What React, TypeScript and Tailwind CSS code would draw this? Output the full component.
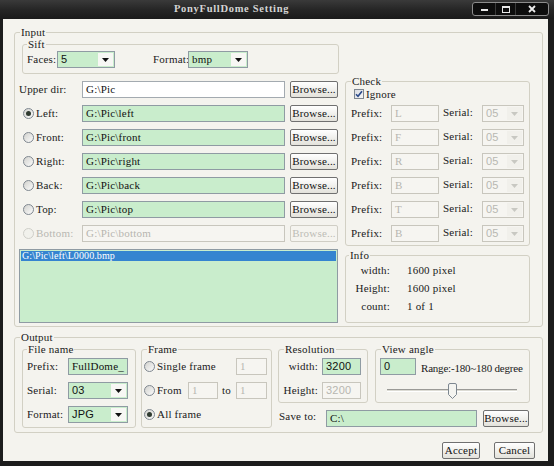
import React from "react";

const box = "border border-[#d2d0c4] rounded-[3px] min-w-0";

function Radio({ checked = false, disabled = false }: { checked?: boolean; disabled?: boolean }) {
  return (
    <span
      className={`w-[11px] h-[11px] shrink-0 rounded-full border flex items-center justify-center ${
        disabled ? "border-[#cfcfc9] bg-[#f1f1ec]" : "border-[#7f8790] bg-linear-to-br from-[#d2d2ce] to-[#fbfbfb]"
      }`}
    >
      {checked && <span className="w-[5px] h-[5px] rounded-full bg-[#2f3a30]" />}
    </span>
  );
}

type Kind = "green" | "white" | "disabled";

function Box({ value, kind, className = "" }: { value: string; kind: Kind; className?: string }) {
  const k =
    kind === "green"
      ? "bg-[#c9edcc] border-[#8f9ba3] text-[#111]"
      : kind === "white"
      ? "bg-white border-[#a3aab0] text-[#111]"
      : "bg-[#f6f5f1] border-[#c8c6bd] text-[#b6b6b0]";
  return (
    <div className={`h-[17px] shrink-0 border pl-[3px] leading-[15px] whitespace-nowrap overflow-hidden ${k} ${className}`}>
      {value}
    </div>
  );
}

function Select({ value, disabled = false, className = "" }: { value: string; disabled?: boolean; className?: string }) {
  return (
    <div
      className={`h-[17px] shrink-0 flex border ${
        disabled ? "border-[#c8c6bd] bg-[#f6f5f1] text-[#b8b8b2]" : "border-[#8f9ba3] bg-[#c9edcc] text-[#111]"
      } ${className}`}
    >
      <span className="flex-1 pl-[3px] leading-[15px] whitespace-nowrap overflow-hidden">{value}</span>
      <span
        className={`w-[15px] my-[1px] mr-[1px] flex items-center justify-center ${
          disabled ? "bg-[#f1f0eb]" : "bg-[#f7f7f4]"
        }`}
      >
        <svg width="7" height="4" viewBox="0 0 7 4">
          <path d="M0 0h7L3.5 4z" fill={disabled ? "#c8c8c2" : "#111"} />
        </svg>
      </span>
    </div>
  );
}

function Btn({ children, className = "", disabled = false }: { children: React.ReactNode; className?: string; disabled?: boolean }) {
  return (
    <button
      className={`h-[17px] shrink-0 border rounded-[2px] leading-[15px] text-[11px] tracking-[0.2px] ${
        disabled
          ? "border-[#d0cec5] text-[#bdbdb6] bg-[#f5f4ef]"
          : "border-[#707070] bg-linear-to-b from-[#ffffff] to-[#e3e2db] text-[#111]"
      } ${className}`}
    >
      {children}
    </button>
  );
}

function Legend({ children, className = "" }: { children: React.ReactNode; className?: string }) {
  return <legend className={`px-[1px] leading-[12px] ${className}`}>{children}</legend>;
}

const dirs: { label: string; path: string; checked?: boolean; disabled?: boolean }[] = [
  { label: "Left:", path: "G:\\Pic\\left", checked: true },
  { label: "Front:", path: "G:\\Pic\\front" },
  { label: "Right:", path: "G:\\Pic\\right" },
  { label: "Back:", path: "G:\\Pic\\back" },
  { label: "Top:", path: "G:\\Pic\\top" },
  { label: "Bottom:", path: "G:\\Pic\\bottom", disabled: true },
];

const prefixes = ["L", "F", "R", "B", "T", "B"];

export default function App() {
  return (
    <div className="w-[554px] h-[466px] bg-[#1c1c1c] flex flex-col font-['Liberation_Serif',serif] text-[11px] tracking-[0.2px] text-[#1a1a1a] overflow-hidden">
      {/* Title bar */}
      <div className="h-[19px] shrink-0 flex items-center bg-linear-to-b from-[#3a3a3a] via-[#262626] to-[#1a1a1a]">
        <span className="pl-[174px] font-bold text-[#d4d4d4] tracking-[0.7px] text-[10.5px] leading-none">
          PonyFullDome Setting
        </span>
        <div className="ml-auto mr-[5px] self-start mt-[2px] h-[14px] w-[77px] flex border border-[#8c8c8c] rounded-[3px] bg-[#0d0d0d]">
          <div className="w-[23px] flex items-end justify-center pb-[4px] border-r border-[#3a3a3a]">
            <span className="w-[7px] h-[2px] bg-[#e8e8e8]" />
          </div>
          <div className="w-[20px] flex items-center justify-center border-r border-[#3a3a3a]">
            <span className="w-[8px] h-[7px] border border-[#e8e8e8] border-t-2" />
          </div>
          <div className="flex-1 flex items-center justify-center">
            <svg width="8" height="8" viewBox="0 0 8 8">
              <path d="M1 1L7 7M7 1L1 7" stroke="#ececec" strokeWidth="1.8" />
            </svg>
          </div>
        </div>
      </div>

      {/* Body */}
      <div className="flex-1 ml-[3px] mr-[6px] mb-[5px] bg-[#f4f3ee] flex flex-col">
        {/* Input */}
        <fieldset className={`${box} ml-[11px] mt-[7px] w-[529px] pl-[4px] pb-[3px]`}>
          <Legend className="ml-[1px]">Input</Legend>
          <fieldset className={`${box} ml-[3px] w-[317px] pl-[4px] pb-[5px]`}>
            <Legend>Sift</Legend>
            <div className="mt-[1px] h-[17px] flex items-center">
              <span className="w-[30px]">Faces:</span>
              <Select value="5" className="w-[58px] font-['Liberation_Sans',sans-serif]" />
              <span className="ml-[38px] w-[35px]">Format:</span>
              <Select value="bmp" className="w-[60px]" />
            </div>
          </fieldset>

          <div className="flex mt-[1px]">
            <div className="w-[319px] pt-[6px] flex flex-col gap-[7px]">
              <div className="h-[17px] flex items-center">
                <span className="w-[63px]">Upper dir:</span>
                <Box value="G:\Pic" kind="white" className="w-[203px]" />
                <Btn className="ml-[5px] w-[48px]">Browse...</Btn>
              </div>
              {dirs.map((d) => (
                <div key={d.label} className="h-[17px] flex items-center">
                  <span className="pl-[4px]" />
                  <Radio checked={d.checked} disabled={d.disabled} />
                  <span className={`ml-[2px] w-[46px] ${d.disabled ? "text-[#b8b8b2]" : ""}`}>{d.label}</span>
                  <Box value={d.path} kind={d.disabled ? "disabled" : "green"} className="w-[203px]" />
                  <Btn className="ml-[5px] w-[48px]" disabled={d.disabled}>
                    Browse...
                  </Btn>
                </div>
              ))}
            </div>

            <fieldset className={`${box} ml-[7px] w-[185px] pl-[5px] pb-[3px]`}>
              <Legend>Check</Legend>
              <div className="h-[12px] mt-[1px] flex items-center pl-[3px]">
                <span className="w-[10px] h-[10px] border border-[#7f8790] bg-linear-to-br from-[#d9dce2] to-[#f6f6f6] flex items-center justify-center">
                  <svg width="8" height="8" viewBox="0 0 8 8">
                    <path d="M1 4.2L3 6.3L7 1.2" fill="none" stroke="#2b4a8a" strokeWidth="1.6" />
                  </svg>
                </span>
                <span className="ml-[2px]">Ignore</span>
              </div>
              <div className="mt-[5px] flex flex-col gap-[7px]">
                {prefixes.map((p, i) => (
                  <div key={i} className="h-[17px] flex items-center">
                    <span className="w-[40px]">Prefix:</span>
                    <Box value={p} kind="disabled" className="w-[48px]" />
                    <span className="ml-[4px] w-[39px] -mt-[3px]">Serial:</span>
                    <Select value="05" disabled className="w-[42px] font-['Liberation_Sans',sans-serif]" />
                  </div>
                ))}
              </div>
            </fieldset>
          </div>

          <div className="flex mt-[3px]">
            <div className="w-[319px] h-[74px] shrink-0 border border-[#8f9ba3] bg-[#c9edcc] p-[1px]">
              <div className="h-[10px] bg-[#3584d0] text-white text-[10px] leading-[10px] pl-[1px] tracking-[0.1px]">
                G:\Pic\left\L0000.bmp
              </div>
            </div>
            <fieldset className={`${box} ml-[7px] w-[185px] pl-[3px] pb-[6px]`}>
              <Legend>Info</Legend>
              {[
                ["width:", "1600 pixel"],
                ["Height:", "1600 pixel"],
                ["count:", "1 of 1"],
              ].map(([a, b]) => (
                <div key={a} className="h-[18px] flex items-center">
                  <span className="w-[41px] text-right">{a}</span>
                  <span className="ml-[17px]">{b}</span>
                </div>
              ))}
            </fieldset>
          </div>
        </fieldset>

        {/* Output */}
        <fieldset className={`${box} ml-[11px] mt-[4px] w-[529px] pl-[4px] pb-[4px]`}>
          <Legend className="ml-[1px]">Output</Legend>
          <div className="flex">
            <fieldset className={`${box} ml-[3px] w-[114px] pl-[4px] pb-[4px]`}>
              <Legend>File name</Legend>
              <div className="mt-[3px] flex flex-col gap-[7px]">
                <div className="h-[17px] flex items-center">
                  <span className="w-[41px]">Prefix:</span>
                  <Box value="FullDome_" kind="green" className="w-[60px]" />
                </div>
                <div className="h-[17px] flex items-center">
                  <span className="w-[41px]">Serial:</span>
                  <Select value="03" className="w-[60px] font-['Liberation_Sans',sans-serif]" />
                </div>
                <div className="h-[17px] flex items-center">
                  <span className="w-[41px]">Format:</span>
                  <Select value="JPG" className="w-[60px] font-['Liberation_Sans',sans-serif]" />
                </div>
              </div>
            </fieldset>

            <fieldset className={`${box} ml-[5px] w-[131px] pl-[2px] pb-[4px]`}>
              <Legend className="ml-[3px]">Frame</Legend>
              <div className="mt-[3px] flex flex-col gap-[7px]">
                <div className="h-[17px] flex items-center">
                  <Radio />
                  <span className="ml-[2px] w-[79px]">Single frame</span>
                  <Box value="1" kind="disabled" className="w-[31px]" />
                </div>
                <div className="h-[17px] flex items-center">
                  <Radio />
                  <span className="ml-[2px] w-[31px]">From</span>
                  <Box value="1" kind="disabled" className="w-[30px]" />
                  <span className="ml-[4px] w-[14px]">to</span>
                  <Box value="1" kind="disabled" className="w-[31px]" />
                </div>
                <div className="h-[17px] flex items-center">
                  <Radio checked />
                  <span className="ml-[2px]">All frame</span>
                </div>
              </div>
            </fieldset>

            <div className="ml-[6px] flex flex-col">
              <div className="flex">
                <fieldset className={`${box} w-[90px] pl-[3px] pb-[3px]`}>
                  <Legend className="ml-[2px]">Resolution</Legend>
                  <div className="mt-[3px] flex flex-col gap-[7px]">
                    <div className="h-[17px] flex items-center">
                      <span className="w-[40px] text-right pr-[4px]">width:</span>
                      <Box value="3200" kind="green" className="w-[39px] font-['Liberation_Sans',sans-serif]" />
                    </div>
                    <div className="h-[17px] flex items-center">
                      <span className="w-[40px] text-right pr-[4px]">Height:</span>
                      <Box value="3200" kind="disabled" className="w-[39px] font-['Liberation_Sans',sans-serif]" />
                    </div>
                  </div>
                </fieldset>
                <fieldset className={`${box} ml-[7px] w-[155px] pl-[4px] pb-[3px]`}>
                  <Legend className="ml-[1px]">View angle</Legend>
                  <div className="mt-[3px] flex flex-col gap-[7px]">
                    <div className="h-[17px] flex items-center">
                      <Box value="0" kind="green" className="w-[36px] font-['Liberation_Sans',sans-serif]" />
                      <span className="ml-[5px] mt-[3px] whitespace-nowrap tracking-[-0.2px]">Range:-180~180 degree</span>
                    </div>
                    <div className="h-[17px] flex items-center relative pl-[7px]">
                      <div className="w-[130px] h-[3px] border-t border-[#9a9a96] border-b border-b-white bg-[#dcdbd4]" />
                      <svg className="absolute left-[68px] top-[1px]" width="9" height="16" viewBox="0 0 9 16">
                        <path
                          d="M0.5 2 Q0.5 0.5 2 0.5 H7 Q8.5 0.5 8.5 2 V11.5 L4.5 15.5 L0.5 11.5 Z"
                          fill="#f4f4f0"
                          stroke="#7d8790"
                        />
                      </svg>
                    </div>
                  </div>
                </fieldset>
              </div>
              <div className="mt-[7px] h-[17px] flex items-center">
                <span className="w-[48px] pl-[1px] -mt-[5px]">Save to:</span>
                <Box value="C:\" kind="green" className="w-[151px]" />
                <Btn className="ml-[6px] w-[46px]">Browse...</Btn>
              </div>
            </div>
          </div>
        </fieldset>

        {/* Buttons */}
        <div className="mt-[9px] flex justify-end mr-[13px] gap-[14px]">
          <Btn className="w-[38px]">Accept</Btn>
          <Btn className="w-[41px]">Cancel</Btn>
        </div>
      </div>
    </div>
  );
}
